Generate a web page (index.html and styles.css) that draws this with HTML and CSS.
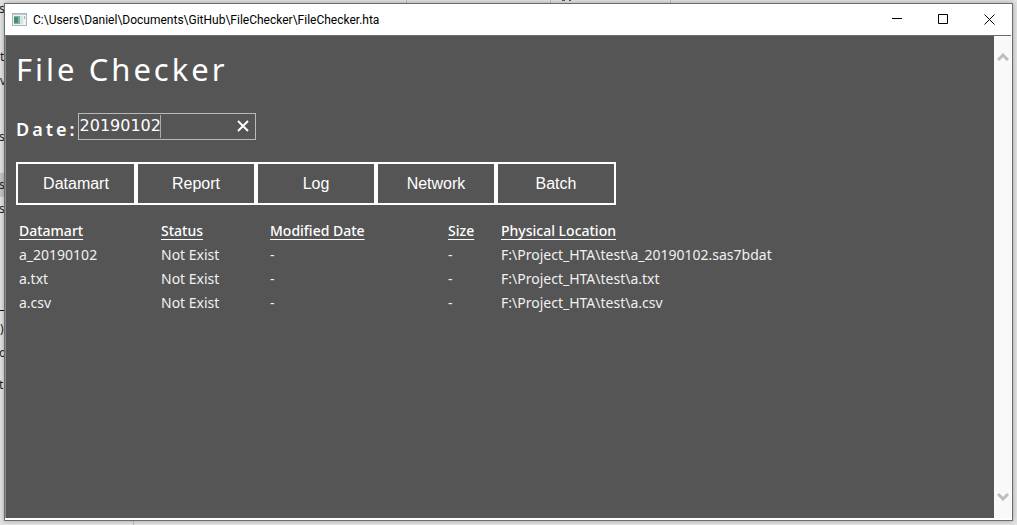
FILE: index.html
```
<!DOCTYPE html>
<html lang="en">
<head>
<meta charset="utf-8">
<title>File Checker</title>
<link rel="stylesheet" href="styles.css">
</head>
<body>
<div class="desktop" aria-hidden="true">
  <svg class="behind" width="700" height="525">
    <g class="ticks">
      <path d="M133.500 520v5M406.500 0v4M550.500 0v4M670.500 0v4"/>
    </g>
    <path class="dots" d="M562 0h3v1h-3zM569 0h2v1h-2z"/>
    <rect class="picked" x="0" y="173" width="5" height="24"/>
    <path class="rule" d="M0 310.500h5"/>
    <g class="scraps">
      <text x="-1" y="13">s</text>
      <text x="0" y="61">t</text>
      <text x="0" y="85">v</text>
      <text x="-1" y="141">s</text>
      <text x="-1" y="189">s</text>
      <text x="-1" y="213">s</text>
      <text x="0" y="333">)</text>
      <text x="-1" y="357">o</text>
      <text x="-1" y="389">t</text>
    </g>
  </svg>
</div>
<div class="window">
  <header class="titlebar">
    <svg class="app-icon" width="15" height="13" viewBox="0 0 15 13">
      <rect x=".5" y=".5" width="14" height="12" fill="#eef3f3" stroke="#aab4bb"/>
      <path d="M1 1h13v1H1z" fill="#bccbd8"/>
      <path d="M2 3h6v8H2z" fill="#7fb3a3"/>
      <path d="M2 4h4v6H2z" fill="#4a8c7a"/>
      <path d="M8 3h3v8H8z" fill="#d7e2e1"/>
      <path d="M12 3h1v3h-1z" fill="#9bb6c0"/>
    </svg>
    <span class="caption">C:\Users\Daniel\Documents\GitHub\FileChecker\FileChecker.hta</span>
    <button class="sysbtn" aria-label="Minimize"><svg width="10" height="11"><path d="M0 4.500h10"/></svg></button>
    <button class="sysbtn" aria-label="Maximize"><svg width="10" height="11"><path d="M.5 .5h9v9h-9z"/></svg></button>
    <button class="sysbtn" aria-label="Close"><svg width="11" height="11"><path d="M.5 .5l10 10M10.500 .5l-10 10"/></svg></button>
  </header>
  <div class="client">
    <main class="page">
      <h1>File Checker</h1>
      <div class="date-row">
        <label for="date">Date:</label>
        <div class="date-box">
          <input id="date" type="text" value="20190102">
          <span class="caret"></span>
          <button class="clear" aria-label="Clear"><svg width="12" height="12"><path d="M1 1l10 10M11 1L1 11"/></svg></button>
        </div>
      </div>
      <nav class="tabs">
        <button>Datamart</button>
        <button>Report</button>
        <button>Log</button>
        <button>Network</button>
        <button>Batch</button>
      </nav>
      <table>
        <colgroup><col class="c-name"><col class="c-status"><col class="c-date"><col class="c-size"><col></colgroup>
        <thead>
          <tr><th>Datamart</th><th>Status</th><th>Modified Date</th><th>Size</th><th>Physical Location</th></tr>
        </thead>
        <tbody>
          <tr><td>a_20190102</td><td>Not Exist</td><td>-</td><td>-</td><td>F:\Project_HTA\test\a_20190102.sas7bdat</td></tr>
          <tr><td>a.txt</td><td>Not Exist</td><td>-</td><td>-</td><td>F:\Project_HTA\test\a.txt</td></tr>
          <tr><td>a.csv</td><td>Not Exist</td><td>-</td><td>-</td><td>F:\Project_HTA\test\a.csv</td></tr>
        </tbody>
      </table>
    </main>
    <div class="scrollbar">
      <svg width="12" height="10"><path d="M1 8l5-5 5 5"/></svg>
      <svg width="12" height="10"><path d="M1 2l5 5 5-5"/></svg>
    </div>
  </div>
</div>
</body>
</html>
```
FILE: styles.css
```
* { box-sizing: border-box; }

body {
  margin: 0;
  height: 100vh;
  padding: 3px 4px 4px;
  background: #e3e3e3;
  font-family: "Noto Sans", "Open Sans", sans-serif;
  overflow: hidden;
}

button {
  margin: 0;
  padding: 0;
  border: 0;
  background: none;
  color: inherit;
}

svg { display: block; fill: none; }

/* what shows around the edges of the window */
.desktop { position: absolute; inset: 0; overflow: hidden; }
.ticks { stroke: #bdbdbd; }
.dots { fill: #555; }
.picked { fill: #c4c4c4; }
.rule { stroke: #111; }
.scraps { fill: #222; font-size: 12px; }

.window {
  position: relative;
  display: flex;
  flex-direction: column;
  height: 100%;
  background: #fff;
  border: 1px solid #6b6b6b;
  box-shadow: 0 0 5px rgba(0, 0, 0, .3);
}

.titlebar {
  display: flex;
  align-items: center;
  height: 31px;
  padding-left: 7px;
  color: #000;
}
.caption {
  flex: 1;
  padding-left: 6px;
  font: 12px/16px Roboto, "Noto Sans", sans-serif;
}
.sysbtn { display: grid; place-items: center; width: 46px; height: 30px; }
.sysbtn path { stroke: #000; }

.client {
  display: flex;
  flex: 1;
  margin: 0 1px 2px 0;
  border-top: 1px solid #6b6b6b;
  border-left: 1px solid #8a8a8a;
}

.page {
  flex: 1;
  padding: 12px 10px;
  background: #555;
  color: #fff;
}

h1 {
  margin: 0;
  font-size: 31px;
  line-height: 42px;
  font-weight: 400;
  letter-spacing: 3px;
}

.date-row { display: flex; margin-top: 23px; }
.date-row label {
  font-size: 18px;
  line-height: 32px;
  font-weight: 600;
  letter-spacing: 3px;
}
.date-box { position: relative; width: 178px; height: 27px; }
.date-box input {
  width: 100%;
  height: 100%;
  padding: 0 24px 3px 1px;
  border: 1px solid #b9b9b9;
  background: none;
  color: #fff;
  font: 16px "DejaVu Sans", sans-serif;
  outline: 0;
}
.caret { position: absolute; left: 82px; top: 2px; width: 1px; height: 23px; background: #aaa; }
.clear { position: absolute; right: 7px; top: 7px; }
.clear path { stroke: #fff; stroke-width: 2; }

.tabs { display: flex; margin-top: 17px; }
.tabs button {
  width: 120px;
  height: 43px;
  border: 2px solid #fff;
  font: 16px "Liberation Sans", Arial, sans-serif;
}

table {
  margin-top: 14px;
  border-collapse: collapse;
  font-size: 14px;
  line-height: 24px;
}
th, td { padding: 0 3px; text-align: left; white-space: nowrap; }
th { font-weight: 500; text-decoration: underline; text-underline-offset: 3px; }
td { color: #f0f0f0; }
.c-name { width: 142px; }
.c-status { width: 109px; }
.c-date { width: 178px; }
.c-size { width: 53px; }

.scrollbar {
  display: flex;
  flex-direction: column;
  justify-content: space-between;
  align-items: center;
  width: 17px;
  padding: 16px 0;
  background: #f9f9f9;
}
.scrollbar path { stroke: #bdbdbd; stroke-width: 3; }
```
